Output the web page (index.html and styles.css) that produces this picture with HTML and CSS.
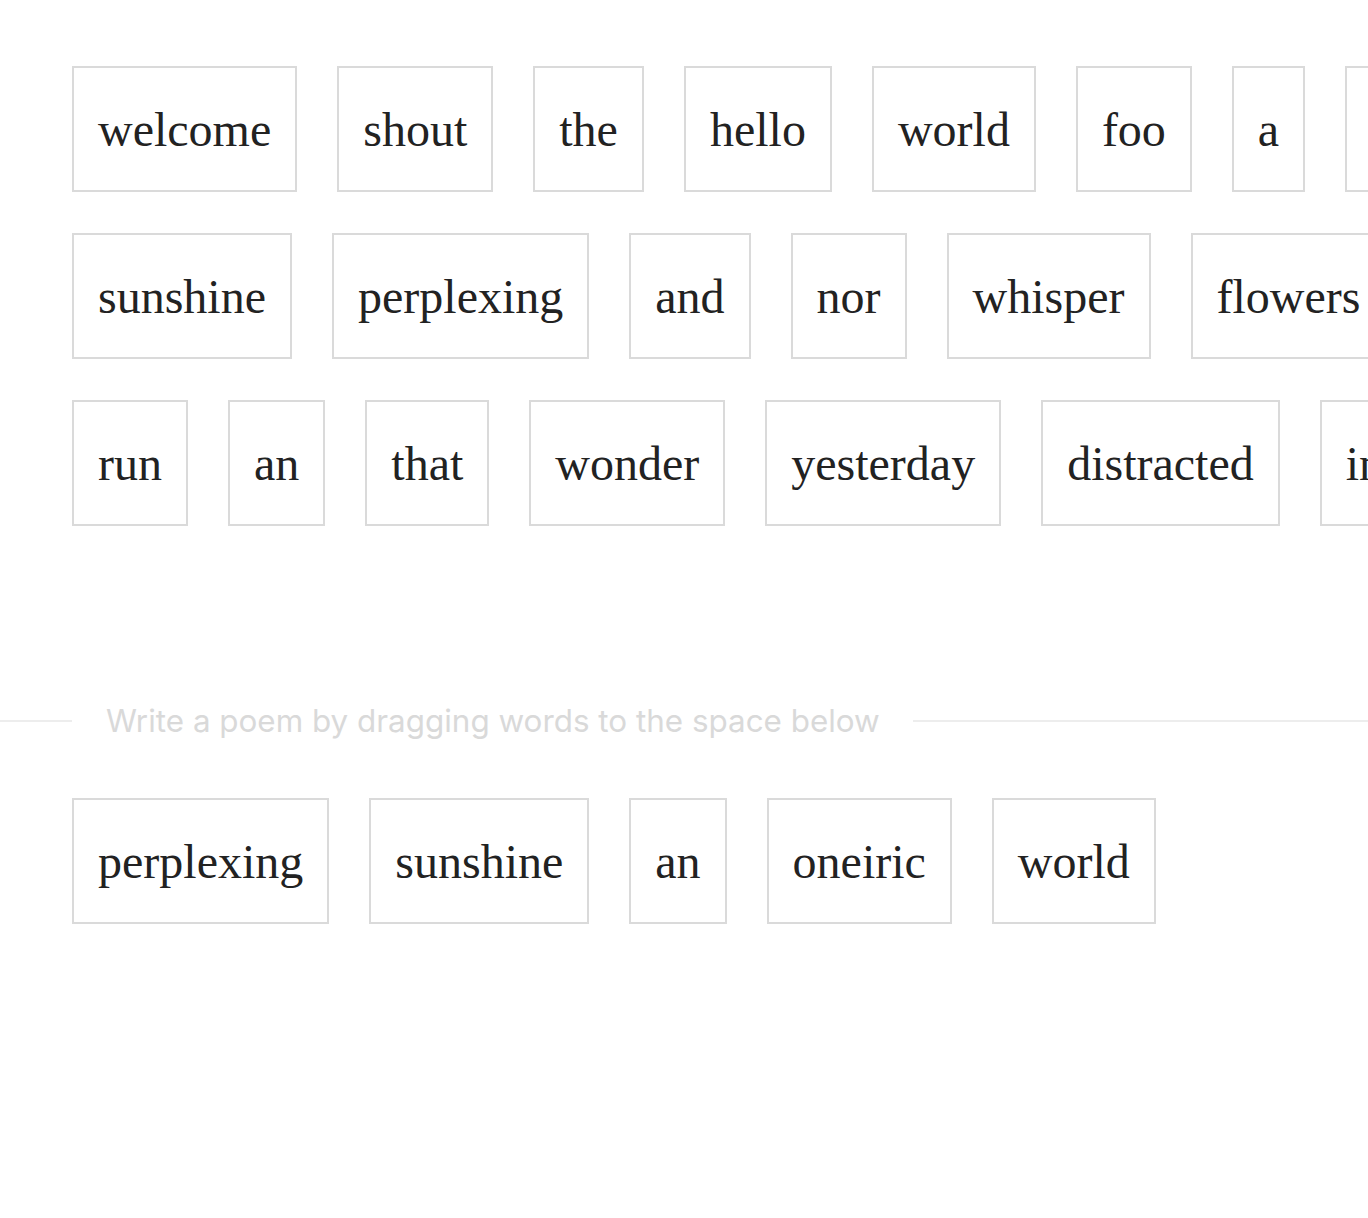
FILE: index.html
```html
<!DOCTYPE html>
<html lang="en">
<head>
<meta charset="utf-8">
<title>Poem</title>
<link rel="stylesheet" href="styles.css">
</head>
<body>
<main class="page">
  <section class="bank">
    <div class="row">
      <span class="word">welcome</span>
      <span class="word">shout</span>
      <span class="word">the</span>
      <span class="word">hello</span>
      <span class="word">world</span>
      <span class="word">foo</span>
      <span class="word">a</span>
      <span class="word">dream</span>
    </div>
    <div class="row">
      <span class="word">sunshine</span>
      <span class="word">perplexing</span>
      <span class="word">and</span>
      <span class="word">nor</span>
      <span class="word">whisper</span>
      <span class="word">flowers</span>
    </div>
    <div class="row">
      <span class="word">run</span>
      <span class="word">an</span>
      <span class="word">that</span>
      <span class="word">wonder</span>
      <span class="word">yesterday</span>
      <span class="word">distracted</span>
      <span class="word">into</span>
    </div>
  </section>
  <div class="divider"><span class="divider-text">Write a poem by dragging words to the space below</span></div>
  <section class="poem">
    <div class="row">
      <span class="word">perplexing</span>
      <span class="word">sunshine</span>
      <span class="word">an</span>
      <span class="word">oneiric</span>
      <span class="word">world</span>
    </div>
  </section>
</main>
</body>
</html>
```
FILE: styles.css
```css
html, body {
  margin: 0;
  padding: 0;
  background: #ffffff;
  overflow: hidden;
}

.page {
  width: 1368px;
  height: 1218px;
  overflow: hidden;
  padding-top: 66px;
  box-sizing: border-box;
}

.bank {
  display: flex;
  flex-direction: column;
  gap: 41px;
}

.row {
  display: flex;
  flex-wrap: nowrap;
  gap: 40px;
  padding-left: 72px;
  overflow: hidden;
}

.word {
  flex: none;
  display: block;
  border: 2px solid #dadada;
  padding: 4px 24px 0;
  height: 118px;
  line-height: 116px;
  font-family: "Liberation Serif", "Times New Roman", serif;
  font-size: 48px;
  color: #222222;
  white-space: nowrap;
}

.divider {
  display: flex;
  align-items: center;
  margin-top: 175px;
  height: 40px;
}

.divider::before {
  content: "";
  flex: none;
  width: 72px;
  height: 2px;
  background: #ededed;
}

.divider::after {
  content: "";
  flex: 1;
  height: 2px;
  background: #ededed;
}

.divider-text {
  margin: 0 33px 0 34px;
  font-family: Inter, "Liberation Sans", sans-serif;
  font-size: 31.4px;
  color: #d9d9d9;
  white-space: nowrap;
  line-height: 40px;
}

.poem {
  margin-top: 57px;
}
```
